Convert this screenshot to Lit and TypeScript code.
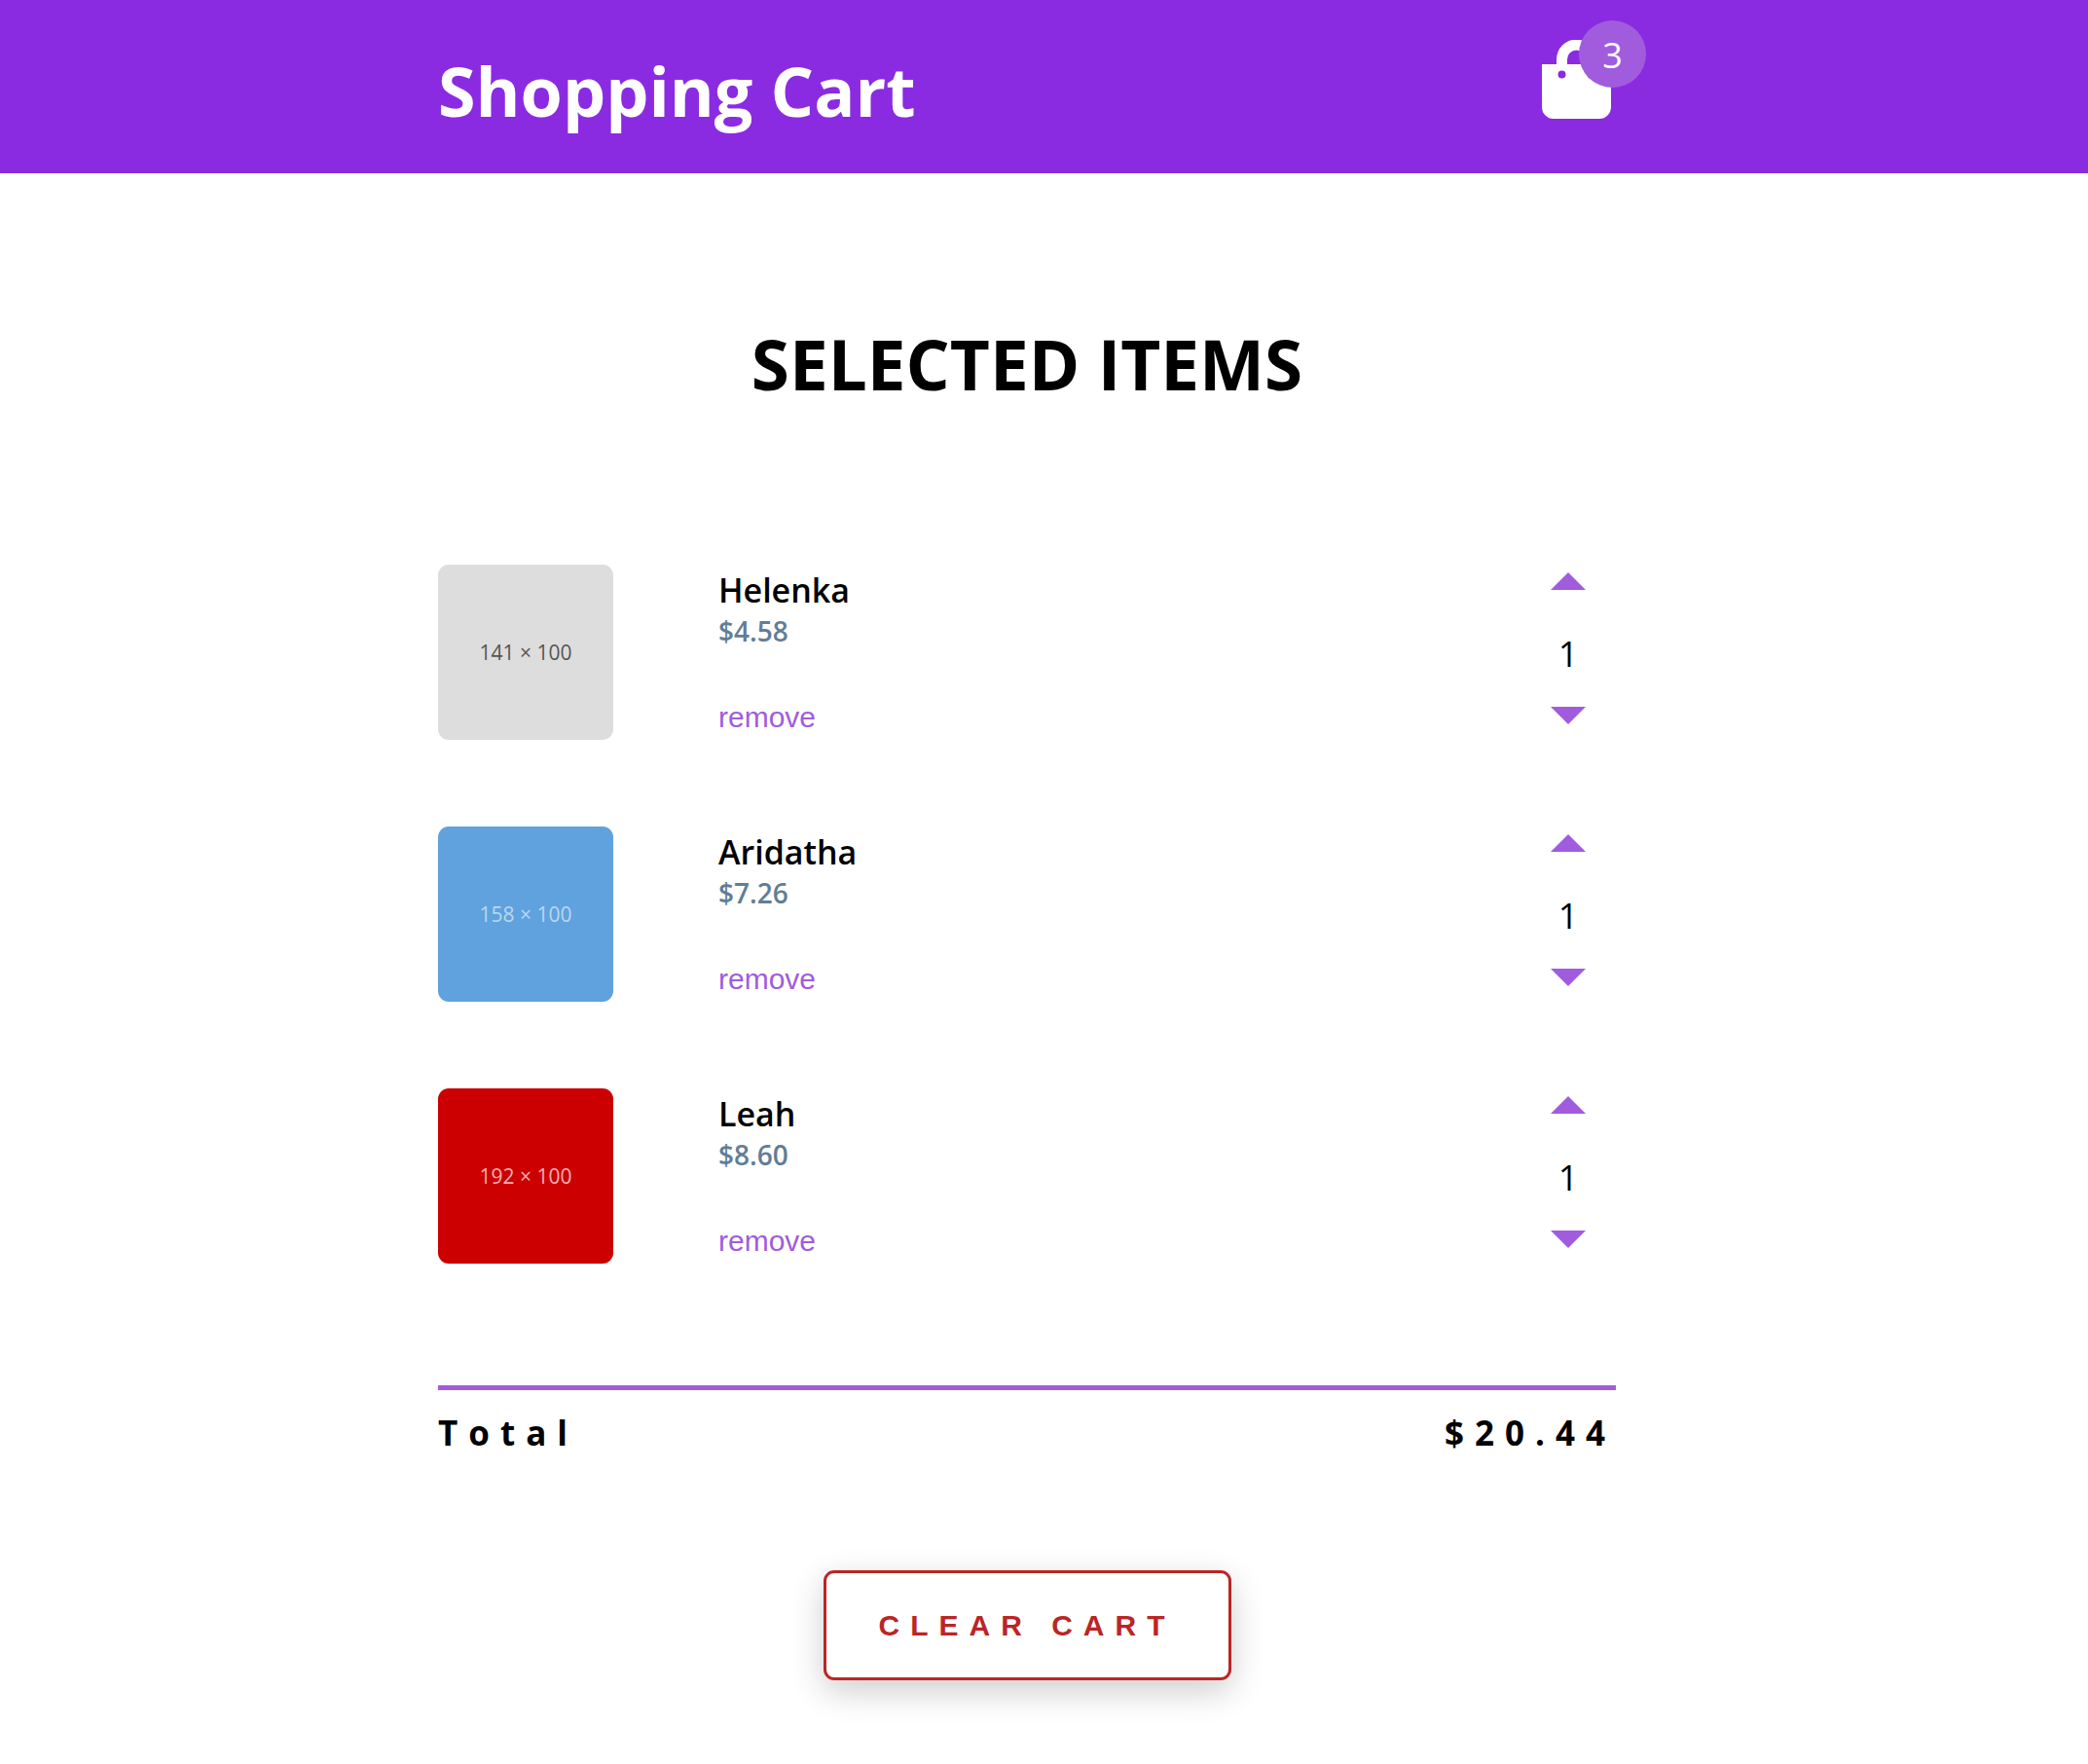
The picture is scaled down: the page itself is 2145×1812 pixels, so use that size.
import { LitElement, html, css } from "lit";
import { customElement, property, state } from "lit/decorators.js";
import { classMap } from "lit/directives/class-map.js";

interface Item {
  id: number;
  name: string;
  price: number;
  amount: number;
  size: string;
  tone: string;
}

@customElement("cart-item")
class CartItem extends LitElement {
  @property({ attribute: false }) item!: Item;

  static styles = css`
    :host {
      display: grid;
      grid-template-columns: 180px 1fr auto;
      column-gap: 108px;
    }
    .thumb {
      display: flex;
      align-items: center;
      justify-content: center;
      height: 180px;
      border-radius: 11px;
      font-size: 21px;
      line-height: 28px;
    }
    .grey { background: #dddddd; color: #555555; }
    .blue { background: #5fa2dd; color: #b9d7f1; }
    .red { background: #cc0000; color: #efb3b3; }
    .info {
      display: flex;
      flex-direction: column;
      align-items: flex-start;
      padding-top: 5px;
    }
    .name {
      margin: 0;
      font-size: 34px;
      font-weight: 600;
      line-height: 42px;
    }
    .price {
      margin: 0;
      color: #617d98;
      font-size: 28px;
      font-weight: 600;
      line-height: 42px;
    }
    .remove {
      margin-top: 50px;
      padding: 0;
      border: 0;
      background: none;
      color: #a05cdd;
      font: 30px/36px "Liberation Sans", Arial, sans-serif;
      cursor: pointer;
    }
    .stepper {
      display: flex;
      flex-direction: column;
      align-items: center;
      justify-content: space-between;
      width: 98px;
      padding: 8px 0 16px;
      box-sizing: border-box;
    }
    .step {
      display: flex;
      padding: 0;
      border: 0;
      background: none;
      cursor: pointer;
    }
    .amount {
      margin: 0;
      padding-top: 12px;
      font-size: 36px;
      line-height: 42px;
    }
  `;

  private send(type: string) {
    this.dispatchEvent(new CustomEvent(type, { detail: this.item.id, bubbles: true, composed: true }));
  }

  render() {
    const { name, price, amount, size, tone } = this.item;
    return html`
      <div class=${classMap({ thumb: true, [tone]: true })}>${size}</div>
      <div class="info">
        <h3 class="name">${name}</h3>
        <p class="price">$${price.toFixed(2)}</p>
        <button class="remove" @click=${() => this.send("item-remove")}>remove</button>
      </div>
      <div class="stepper">
        <button class="step" aria-label="Increase" @click=${() => this.send("item-increase")}>
          <svg width="36" height="18" viewBox="0 0 36 18" fill="#a05cdd"><path d="M0 18 18 0l18 18z" /></svg>
        </button>
        <p class="amount">${amount}</p>
        <button class="step" aria-label="Decrease" @click=${() => this.send("item-decrease")}>
          <svg width="36" height="18" viewBox="0 0 36 18" fill="#a05cdd"><path d="M0 0h36L18 18z" /></svg>
        </button>
      </div>
    `;
  }
}

@customElement("app-root")
class AppRoot extends LitElement {
  @state() private items: Item[] = [
    { id: 1, name: "Helenka", price: 4.58, amount: 1, size: "141 × 100", tone: "grey" },
    { id: 2, name: "Aridatha", price: 7.26, amount: 1, size: "158 × 100", tone: "blue" },
    { id: 3, name: "Leah", price: 8.6, amount: 1, size: "192 × 100", tone: "red" },
  ];

  static styles = css`
    :host {
      display: block;
      color: #000;
      background: #fff;
      font-family: "Segoe UI", "Open Sans", "Noto Sans", sans-serif;
    }
    .bar,
    .page {
      padding-right: 35px;
    }
    .bar {
      background: #8a2be2;
      color: #fff;
    }
    .inner {
      width: 92%;
      max-width: 1210px;
      margin: 0 auto;
    }
    .bar .inner {
      display: flex;
      justify-content: space-between;
      align-items: flex-start;
    }
    .title {
      margin: 0;
      padding: 45px 0 37px;
      font-size: 70px;
      font-weight: 700;
      line-height: 96px;
    }
    .bag {
      position: relative;
      display: flex;
      margin: 41px 5px 0 0;
    }
    .badge {
      position: absolute;
      top: -20px;
      right: -36px;
      width: 69px;
      height: 69px;
      border-radius: 50%;
      background: #a05cdd;
      font-size: 36px;
      line-height: 72px;
      text-align: center;
    }
    .heading {
      margin: 0;
      padding: 148px 0 158px;
      font-size: 71px;
      font-weight: 700;
      line-height: 96px;
      text-align: center;
      text-transform: uppercase;
    }
    .list {
      display: grid;
      row-gap: 89px;
    }
    .total {
      display: flex;
      justify-content: space-between;
      margin-top: 125px;
      padding-top: 20px;
      border-top: 5px solid #a05cdd;
      font-size: 35px;
      font-weight: 700;
      line-height: 48px;
      letter-spacing: 11px;
    }
    .actions {
      display: flex;
      justify-content: center;
      padding: 117px 0 86px;
    }
    .clear {
      padding: 36px 54px;
      border: 3px solid #bb2525;
      border-radius: 11px;
      background: #fff;
      color: #bb2525;
      box-shadow: 0 11px 34px rgba(0, 0, 0, 0.2);
      font: 700 30px/35px "Liberation Sans", Arial, sans-serif;
      letter-spacing: 11px;
      text-transform: uppercase;
      cursor: pointer;
    }
  `;

  private change(id: number, by: number) {
    this.items = this.items
      .map((i) => (i.id === id ? { ...i, amount: i.amount + by } : i))
      .filter((i) => i.amount > 0);
  }

  render() {
    const count = this.items.reduce((n, i) => n + i.amount, 0);
    const total = this.items.reduce((n, i) => n + i.amount * i.price, 0);
    return html`
      <header class="bar">
        <div class="inner">
          <h1 class="title">Shopping Cart</h1>
          <div class="bag">
            <svg width="71" height="81" viewBox="0 0 71 81" fill="#fff" aria-hidden="true">
              <path
                fill-rule="evenodd"
                d="M0 25h15v-5a20.500 20.500 0 0 1 41 0v5h15v44a12 12 0 0 1-12 12H12A12 12 0 0 1 0 69zM26 25h19v-5a9.500 9.500 0 0 0-19 0zM20.500 31.500a4 4 0 1 0 0 8 4 4 0 0 0 0-8zM50.500 31.500a4 4 0 1 0 0 8 4 4 0 0 0 0-8z"
              />
            </svg>
            <span class="badge">${count}</span>
          </div>
        </div>
      </header>
      <main class="page">
        <div class="inner">
          <h2 class="heading">Selected items</h2>
          <div
            class="list"
            @item-remove=${(e: CustomEvent) => (this.items = this.items.filter((i) => i.id !== e.detail))}
            @item-increase=${(e: CustomEvent) => this.change(e.detail, 1)}
            @item-decrease=${(e: CustomEvent) => this.change(e.detail, -1)}
          >
            ${this.items.map((i) => html`<cart-item .item=${i}></cart-item>`)}
          </div>
          <div class="total">
            <span>Total</span>
            <span>$${total.toFixed(2)}</span>
          </div>
          <div class="actions">
            <button class="clear" @click=${() => (this.items = [])}>Clear cart</button>
          </div>
        </div>
      </main>
    `;
  }
}
